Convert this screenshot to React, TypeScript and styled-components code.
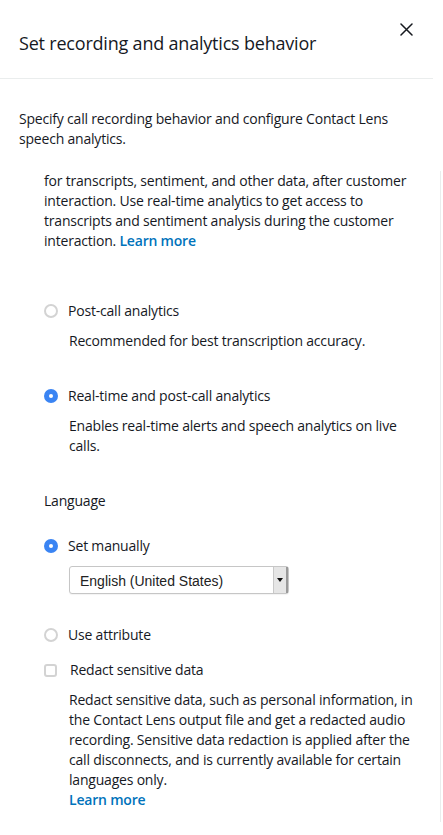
import React from "react";
import styled, { createGlobalStyle } from "styled-components";

const Global = createGlobalStyle`
  html, body { margin: 0; padding: 0; background: #ffffff; }
  body { font-family: "Open Sans", "Noto Sans", sans-serif; color: #16191f; }
  * { box-sizing: border-box; }
`;

const Panel = styled.div`
  width: 443px;
  height: 835px;
  overflow: hidden;
  background: #fff;
`;

const Header = styled.div`
  width: 433px;
  height: 79px;
  border-bottom: 1px solid #eaeded;
  display: flex;
  align-items: flex-start;
  justify-content: space-between;
  padding: 31px 20px 0 19px;
`;

const Title = styled.h2`
  margin: 0;
  font-size: 18px;
  font-weight: 400;
  line-height: 24px;
  color: #16191f;
  letter-spacing: -0.2px;
`;

const Close = styled.button`
  border: 0;
  background: none;
  padding: 0;
  margin-top: -8px;
  width: 13px;
  height: 13px;
  display: flex;
  cursor: pointer;
`;

const Body = styled.div`
  padding: 30px 0 0 19px;
`;

const Paragraph = styled.p`
  margin: 0;
  font-size: 14px;
  line-height: 20px;
  width: 400px;
  letter-spacing: -0.2px;
`;

const Scroller = styled.div`
  margin-top: 22px;
  border-right: 1px solid #eaeded;
  width: 422px;
  height: 651px;
  padding: 0 0 0 25px;
`;

const Text = styled.p<{ $mt?: number; $indent?: number; $w?: number }>`
  margin: ${(p) => p.$mt ?? 0}px 0 0 ${(p) => p.$indent ?? 0}px;
  font-size: 14px;
  line-height: 20px;
  width: ${(p) => p.$w ?? 370}px;
  letter-spacing: -0.2px;
`;

const Link = styled.a`
  color: #0073bb;
  text-decoration: none;
  font-weight: 600;
`;

const OptionRow = styled.label<{ $mt: number }>`
  display: flex;
  align-items: center;
  gap: 10px;
  margin-top: ${(p) => p.$mt}px;
  font-size: 14px;
  line-height: 20px;
  letter-spacing: -0.2px;
  height: 20px;
`;

const Radio = styled.span<{ $on?: boolean }>`
  width: 14px;
  height: 14px;
  border-radius: 50%;
  flex: none;
  position: relative;
  background: ${(p) => (p.$on ? "#3a84f3" : "#fff")};
  border: ${(p) => (p.$on ? "none" : "2px solid #d3d3d3")};
  &::after {
    content: "";
    display: ${(p) => (p.$on ? "block" : "none")};
    position: absolute;
    left: 5px;
    top: 5px;
    width: 4px;
    height: 4px;
    border-radius: 50%;
    background: #fff;
  }
`;

const Check = styled.span`
  width: 13px;
  height: 13px;
  border-radius: 3px;
  border: 2px solid #d3d3d3;
  background: #fff;
  flex: none;
  margin-right: 3px;
`;

const Heading = styled.div<{ $mt: number }>`
  margin-top: ${(p) => p.$mt}px;
  font-size: 14px;
  line-height: 20px;
  letter-spacing: -0.2px;
`;

const Select = styled.div`
  margin: 10px 0 0 25px;
  width: 220px;
  height: 28px;
  border: 1px solid #c6c6c6;
  border-radius: 3px;
  display: flex;
  align-items: stretch;
  background: #fff;
  box-shadow: 0 1px 1px rgba(0, 0, 0, 0.05);
`;

const SelectValue = styled.span`
  flex: 1;
  display: flex;
  align-items: center;
  padding: 2px 0 0 10px;
  font-family: "Liberation Sans", Arial, sans-serif;
  font-size: 14px;
  color: #222;
`;

const SelectButton = styled.span`
  width: 15px;
  background: #e6e6e6;
  border-left: 1px solid #c9c9c9;
  border-right: 2px solid #9a9a9a;
  display: flex;
  align-items: center;
  justify-content: center;
  &::after {
    content: "";
    border-left: 3px solid transparent;
    border-right: 3px solid transparent;
    border-top: 4px solid #111;
  }
`;

export default function App() {
  return (
    <Panel>
      <Global />
      <Header>
        <Title>Set recording and analytics behavior</Title>
        <Close aria-label="Close">
          <svg width="13" height="13" viewBox="0 0 13 13">
            <path d="M1 1L12 12M12 1L1 12" stroke="#16191f" strokeWidth="1.5" strokeLinecap="round" />
          </svg>
        </Close>
      </Header>
      <Body>
        <Paragraph>
          Specify call recording behavior and configure Contact Lens speech analytics.
        </Paragraph>
        <Scroller>
          <Text>
            for transcripts, sentiment, and other data, after customer interaction. Use real-time
            analytics to get access to transcripts and sentiment analysis during the customer
            interaction. <Link href="#">Learn more</Link>
          </Text>

          <OptionRow $mt={50}>
            <Radio />
            Post-call analytics
          </OptionRow>
          <Text $mt={10} $indent={25}>Recommended for best transcription accuracy.</Text>

          <OptionRow $mt={35}>
            <Radio $on />
            Real-time and post-call analytics
          </OptionRow>
          <Text $mt={10} $indent={25} $w={350}>
            Enables real-time alerts and speech analytics on live calls.
          </Text>

          <Heading $mt={35}>Language</Heading>

          <OptionRow $mt={25}>
            <Radio $on />
            Set manually
          </OptionRow>
          <Select>
            <SelectValue>English (United States)</SelectValue>
            <SelectButton />
          </Select>

          <OptionRow $mt={31}>
            <Radio />
            Use attribute
          </OptionRow>

          <OptionRow $mt={15}>
            <Check />
            Redact sensitive data
          </OptionRow>
          <Text $mt={10} $indent={25} $w={350}>
            Redact sensitive data, such as personal information, in the Contact Lens output file
            and get a redacted audio recording. Sensitive data redaction is applied after the call
            disconnects, and is currently available for certain languages only.
          </Text>
          <Text $indent={25}>
            <Link href="#">Learn more</Link>
          </Text>
        </Scroller>
      </Body>
    </Panel>
  );
}
